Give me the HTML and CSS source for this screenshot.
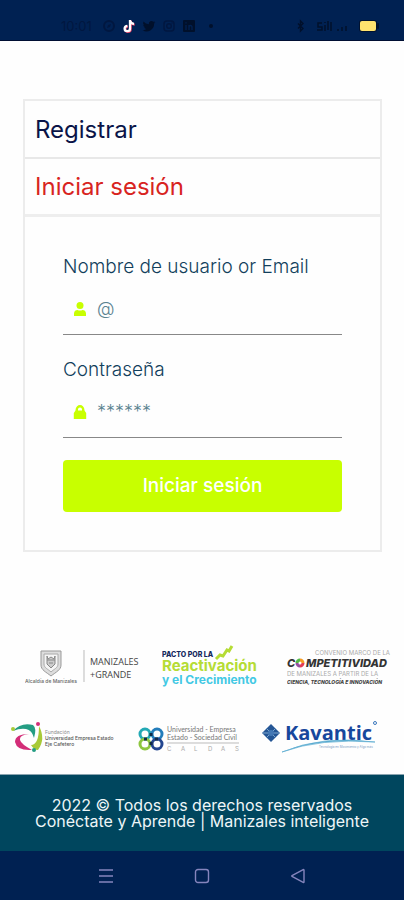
FILE: index.html
```html
<!DOCTYPE html>
<html lang="es">
<head>
<meta charset="utf-8">
<meta name="viewport" content="width=device-width, initial-scale=1">
<title>Conéctate y Aprende</title>
<link rel="stylesheet" href="styles.css">
</head>
<body>
<header class="status">
  <div class="status-group">
    <span class="time">10:01</span>
    <svg class="ico faint" viewBox="0 0 14 14"><circle cx="7" cy="7" r="5" fill="none" stroke="currentColor" stroke-width="2"/><path d="M5 9l1-3 3-1-1 3z" fill="currentColor"/></svg>
    <svg class="ico" viewBox="0 0 14 14"><path d="M8 1v8.500a2.700 2.700 0 1 1-2.700-2.700M8 1c.2 2.400 1.600 3.700 4 3.900" transform="translate(.7 .7)" fill="none" stroke="#ee4468" stroke-width="2.200"/><path d="M8 1v8.500a2.700 2.700 0 1 1-2.700-2.700M8 1c.2 2.400 1.600 3.700 4 3.900" fill="none" stroke="#fff" stroke-width="2.300"/></svg>
    <svg class="ico" viewBox="0 0 24 24"><path fill="currentColor" d="M23 5.500a9 9 0 0 1-2.600.7 4.500 4.500 0 0 0 2-2.500 9 9 0 0 1-2.900 1.100 4.500 4.500 0 0 0-7.700 4.100A12.800 12.800 0 0 1 2.500 4.200a4.500 4.500 0 0 0 1.400 6 4.500 4.500 0 0 1-2-.6 4.500 4.500 0 0 0 3.600 4.500 4.500 4.500 0 0 1-2 .1 4.500 4.500 0 0 0 4.200 3.100A9 9 0 0 1 1 19.200a12.800 12.800 0 0 0 19.700-11.400A9 9 0 0 0 23 5.500z"/></svg>
    <svg class="ico faint" viewBox="0 0 14 14"><rect x="2" y="2" width="10" height="10" rx="3" fill="none" stroke="currentColor" stroke-width="1.500"/><circle cx="7" cy="7" r="2.300" fill="none" stroke="currentColor" stroke-width="1.500"/><circle cx="10" cy="4" r=".7" fill="currentColor"/></svg>
    <svg class="ico" viewBox="0 0 14 14"><rect x="1" y="1" width="12" height="12" rx="1" fill="currentColor"/><path d="M4 6v5M7 11V6M7 8.500q0-2 1.500-2T10 8.500V11M4 3.200v1.200" fill="none" stroke="#00204f" stroke-width="1.400"/></svg>
    <svg class="ico" viewBox="0 0 14 14"><circle cx="9" cy="7" r="2" fill="currentColor"/></svg>
  </div>
  <div class="status-group">
    <svg class="ico" viewBox="0 0 14 14"><path d="M4 4.500l5 5L6.500 12V2L9 4.500l-5 5" fill="none" stroke="currentColor" stroke-width="1.400"/></svg>
    <svg class="signal" viewBox="0 0 38 14"><path d="M8 4H4v4h4v3H3M11 3v1M11 6v6M14 2v9M17 3v9M24 10v2M28 8v4M32 7v5" fill="none" stroke="currentColor" stroke-width="1.500"/></svg>
    <svg class="battery" viewBox="0 0 22 14"><rect x="1" y="1" width="18" height="12" rx="3" fill="#001230"/><rect x="19" y="4" width="2" height="6" rx="1" fill="#001230"/><rect x="2" y="2" width="16" height="10" rx="2" fill="#ffe36e"/></svg>
  </div>
</header>

<main>
  <section class="card">
    <nav class="tabs">
      <a class="tab" href="#registrar">Registrar</a>
      <a class="tab tab-active" href="#iniciar">Iniciar sesión</a>
    </nav>
    <form class="form" id="iniciar">
      <label class="label" for="user">Nombre de usuario or Email</label>
      <div class="field">
        <svg class="field-icon" viewBox="0 0 14 16"><circle cx="7" cy="4.500" r="3.500" fill="currentColor"/><path d="M1 15v-2.500C1 10 2.800 9 4.500 9c1.700.7 3.300.7 5 0C11.200 9 13 10 13 12.500V15z" fill="currentColor"/></svg>
        <input class="input" id="user" type="text" placeholder="@">
      </div>
      <label class="label" for="pass">Contraseña</label>
      <div class="field">
        <svg class="field-icon" viewBox="0 0 14 16"><path d="M3.800 8V5.500a3.200 3.200 0 0 1 6.400 0V8" fill="none" stroke="currentColor" stroke-width="2.400"/><path d="M2.500 6.500h9L13.200 9v6H.8V9z" fill="currentColor"/></svg>
        <input class="input" id="pass" type="password" placeholder="******">
      </div>
      <button class="submit" type="submit">Iniciar sesión</button>
    </form>
  </section>

  <section class="logos">
    <div class="logo-row">
      <svg width="114" height="44" viewBox="0 0 114 44" role="img">
        <path d="M16 7h20v14c0 5-5 7-10 11-5-4-10-6-10-11z" fill="#ddd" stroke="#999"/>
        <path d="M19 10h14v10c0 4-4 5-7 8-3-3-7-4-7-8z" fill="#f5f5f5" stroke="#aaa"/>
        <path d="M22 12l1 3 3-2 3 2 1-3v8l-4 4-4-4zM22 16h8M24 19h4" fill="#ccc" stroke="#888"/>
        <text x="0" y="39" class="t5 semi" fill="#666">Alcaldía de Manizales</text>
        <path d="M59 6v32" stroke="#bbb"/>
        <g class="hand"><text x="65" y="21">MANIZALES</text><text x="65" y="34">+GRANDE</text></g>
      </svg>
      <svg width="102" height="44" viewBox="0 0 102 44" role="img">
        <text x="0" y="13" class="t7 black" fill="#14265c">PACTO POR LA</text>
        <text x="0" y="27" class="t15 heavy" fill="#b5dc35">Reactivación</text>
        <text x="0" y="40" class="t12 heavy" fill="#43c9e4">y el Crecimiento</text>
        <path d="M54 15l4-4 3 1 4-6 2 1 3-5" fill="none" stroke="#b5dc35" stroke-width="3"/>
      </svg>
      <svg width="104" height="44" viewBox="0 0 104 44" role="img">
        <text x="103" y="11" class="t6" text-anchor="end" fill="#aaa">CONVENIO MARCO DE LA</text>
        <g class="competitive"><text x="0" y="23">C</text><text x="19" y="23">MPETITIVIDAD</text></g>
        <g fill="none" stroke-width="3"><path d="M13 16a3 3 0 0 1 3 3" stroke="#f59b23"/><path d="M16 19a3 3 0 0 1-3 3" stroke="#e43b54"/><path d="M13 22a3 3 0 0 1-3-3" stroke="#9650a0"/><path d="M10 19a3 3 0 0 1 3-3" stroke="#54b947"/></g>
        <text x="0" y="32" class="t6" fill="#aaa">DE MANIZALES A PARTIR DE LA</text>
        <text x="0" y="40" class="t5 black slant" fill="#444">CIENCIA, TECNOLOGÍA E INNOVACIÓN</text>
      </svg>
    </div>
    <div class="logo-row logo-row-wide">
      <svg width="104" height="40" viewBox="0 0 104 40" role="img">
        <path d="M2 12Q10 3 22 6q4 3 1 13-2-8-8-9-6-1-13 2z" fill="#249d83"/>
        <path d="M28 7q7 13-1 24-4 0-7-5 8 0 8-19z" fill="#a8ca38"/>
        <path d="M18 15Q8 16 9 21q1 4 12 10-15 1-17-8Q4 15 18 15z" fill="#d32d78"/>
        <circle cx="27" cy="5" r="2" fill="#d32d78"/><circle cx="2" cy="10" r="2" fill="#a8ca38"/><circle cx="23" cy="31" r="2" fill="#249d83"/>
        <text x="34" y="15" class="t5" fill="#888">Fundación</text>
        <text x="34" y="21" class="t5 semi" fill="#555">Universidad Empresa Estado</text>
        <text x="34" y="27" class="t5 semi" fill="#555">Eje Cafetero</text>
      </svg>
      <svg width="104" height="40" viewBox="0 0 104 40" role="img">
        <g fill="none" stroke-width="3"><circle cx="8" cy="15" r="5" stroke="#23a9b5"/><circle cx="20" cy="15" r="5" stroke="#237dbb"/><circle cx="8" cy="25" r="5" stroke="#8dc63f"/><circle cx="20" cy="25" r="5" stroke="#23468f"/></g>
        <path d="M7 20h3M14 14v3M14 23v3M18 20h3" stroke="#122b48" stroke-width="3"/>
        <text x="30" y="13" class="uni" fill="#777">Universidad - Empresa</text>
        <text x="30" y="21" class="uni" fill="#777">Estado - Sociedad Civil</text>
        <path d="M30 24h72" stroke="#bbb"/>
        <g class="t6" fill="#aaa"><text x="30" y="32">C</text><text x="44" y="32">A</text><text x="57" y="32">L</text><text x="71" y="32">D</text><text x="84" y="32">A</text><text x="98" y="32">S</text></g>
      </svg>
      <svg width="116" height="40" viewBox="0 0 116 40" role="img">
        <path d="M9 5l9 9-9 9-9-9z" fill="#255695"/><path d="M4 9l10 10M14 9L4 19M1 14h16" stroke="#7fa8d0"/><circle cx="9" cy="14" r="3" fill="#4579b5"/>
        <text x="23" y="21" class="kavantic">Kavantic</text>
        <circle cx="113" cy="4" r="1.500" fill="none" stroke="#3c79bd"/>
        <path d="M20 33q40-17 93-10-55-4-93 10z" fill="#59abd0" stroke="#59abd0" stroke-width=".7"/>
        <text x="57" y="29" class="t3" fill="#7a9cc4">Tecnología en Movimiento y Algo más</text>
      </svg>
    </div>
  </section>
</main>

<footer class="footer">
  <p>2022 © Todos los derechos reservados</p>
  <p>Conéctate y Aprende | Manizales inteligente</p>
</footer>
<nav class="system">
  <button class="sys" type="button" aria-label="Recientes"><svg viewBox="0 0 16 16"><path d="M1 2h14M1 8h14M1 14h14" stroke="currentColor" stroke-width="1.500"/></svg></button>
  <button class="sys" type="button" aria-label="Inicio"><svg viewBox="0 0 16 16"><rect x="1.500" y="1.500" width="13" height="13" rx="2.500" fill="none" stroke="currentColor" stroke-width="1.400"/></svg></button>
  <button class="sys" type="button" aria-label="Atrás"><svg viewBox="0 0 16 16"><path d="M14 2v12q0 .7-.8.300L2 8.300q-.5-.3 0-.6L13.200 1.700q.8-.4.8.3z" fill="none" stroke="currentColor" stroke-width="1.400"/></svg></button>
</nav>
</body>
</html>
```
FILE: styles.css
```css
* { box-sizing: border-box; }
body {
  margin: 0;
  min-height: 100vh;
  display: flex;
  flex-direction: column;
  background: #fefefe;
  font-family: Inter, "Open Sans", sans-serif;
}
main { flex: 1; display: flex; flex-direction: column; }

.status {
  height: 41px;
  padding: 12px 24px 0 61px;
  display: flex;
  align-items: center;
  justify-content: space-between;
  background: #002152;
  border-bottom: 1px solid #000f33;
  color: #00102b;
}
.status-group { display: flex; align-items: center; gap: 6px; }
.time { font-size: 13px; color: #001740; margin-right: 4px; }
.ico { width: 14px; height: 14px; }
.faint { color: #001740; }
.signal { width: 38px; height: 14px; }
.battery { width: 22px; height: 14px; }

.card { margin: 58px 22px 0 23px; border: 2px solid #ececec; }
.tab {
  display: flex;
  align-items: center;
  height: 58px;
  padding: 0 10px;
  border-bottom: 2px solid #e8e8e8;
  font-size: 24px;
  color: #0a1448;
  text-decoration: none;
}
.tab-active { color: #d8241f; border-bottom-width: 3px; border-bottom-color: #eee; }
.form { padding: 37px 38px 38px; display: flex; flex-direction: column; }
.label { font-size: 19px; line-height: 26px; font-weight: 300; color: #123f5c; }
.field {
  display: flex;
  align-items: center;
  height: 55px;
  margin-bottom: 22px;
  padding: 4px 0 0 10px;
  border-bottom: 1px solid #888;
}
.field-icon { width: 14px; height: 16px; color: #c8ff00; }
.input {
  flex: 1;
  min-width: 0;
  border: 0;
  outline: 0;
  padding: 0 10px;
  background: none;
  font: 300 18px/24px Inter, "Open Sans", sans-serif;
  color: #123f5c;
}
.input::placeholder { color: #5a8290; opacity: 1; }
.submit {
  height: 52px;
  border: 0;
  border-radius: 4px;
  background: #c8ff00;
  color: #fff;
  font: 500 19px/24px Inter, "Open Sans", sans-serif;
}

.logos { margin-top: auto; padding-bottom: 15px; display: grid; gap: 31px; }
.logo-row { display: flex; justify-content: space-between; padding: 0 13px 0 25px; }
.logo-row-wide { padding: 0 26px 0 11px; }
.t3 { font-size: 3px; }
.t5 { font-size: 5px; }
.t6 { font-size: 6px; }
.t7 { font-size: 7px; }
.t12 { font-size: 12px; }
.t15 { font-size: 15px; }
.semi { font-weight: 500; }
.heavy { font-weight: 700; }
.black { font-weight: 800; }
.slant { font-style: italic; }
.uni { font: 400 7px Lato, sans-serif; }
.hand { font: 400 9px "Open Sans", sans-serif; fill: #444; }
.competitive { font: italic 800 11px Inter, sans-serif; fill: #333; }
.kavantic { font: 700 20px "Open Sans", sans-serif; fill: #17479c; }

.footer {
  height: 77px;
  display: flex;
  flex-direction: column;
  justify-content: center;
  background: #00465e;
  border-top: 1px solid #8aa4b0;
  text-align: center;
  color: #eef6f8;
  font-size: 16px;
  line-height: 16px;
}
.footer p { margin: 0; }
.system {
  height: 49px;
  display: flex;
  align-items: center;
  justify-content: center;
  gap: 80px;
  background: #002152;
}
.sys { width: 16px; height: 16px; padding: 0; border: 0; background: none; color: #8585bd; }
.sys svg { display: block; width: 16px; height: 16px; }
```
